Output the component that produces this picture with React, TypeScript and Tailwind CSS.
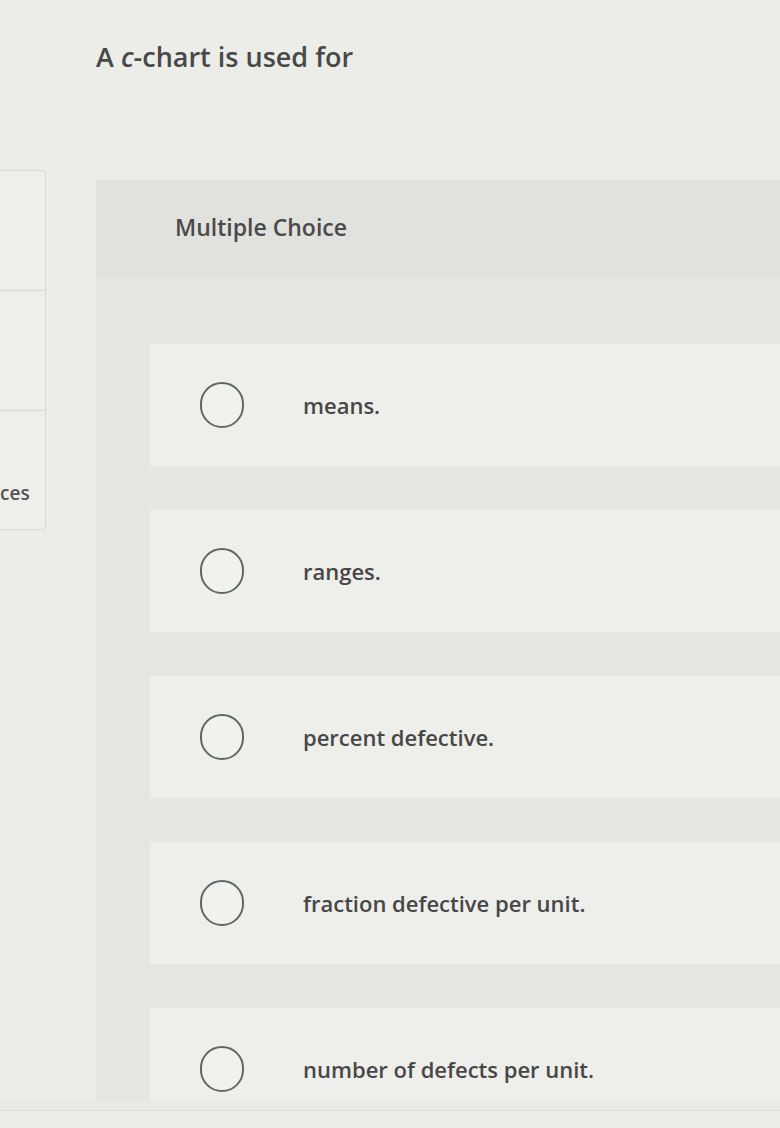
import React from "react";

const options = [
  "means.",
  "ranges.",
  "percent defective.",
  "fraction defective per unit.",
  "number of defects per unit.",
];

function Radio() {
  return (
    <span className="block w-[44px] h-[46px] shrink-0 rounded-full border-[2.5px] border-[#5d6866] bg-[#f1f1ee]" />
  );
}

export default function App() {
  return (
    <div
      className="w-[780px] h-[1128px] overflow-hidden bg-[#ecece8] text-[#474747] flex flex-col"
      style={{ fontFamily: "'Open Sans', Lato, sans-serif" }}
    >
      <div className="flex flex-1 min-h-0">
        {/* side panel, cut off by the screen edge */}
        <div className="w-[46px] shrink-0 pt-[170px]">
          <div className="flex flex-col border border-l-0 border-[#d9d9d5] rounded-r-sm bg-[#eeeeea]">
            <div className="h-[120px] border-b border-[#d9d9d5]" />
            <div className="h-[120px] border-b border-[#d9d9d5]" />
            <div className="h-[118px] flex items-end pb-[26px]">
              <span className="text-[19px] leading-none font-semibold text-[#555]">ces</span>
            </div>
          </div>
        </div>

        {/* question */}
        <div className="flex-1 min-w-0 ml-[50px] flex flex-col">
          <h1 className="pt-[37px] h-[180px] text-[27px] leading-[40px] font-semibold text-[#484848]">
            A <i>c</i>-chart is used for
          </h1>

          <div className="flex-1 min-h-0 bg-[#e5e5e1] flex flex-col">
            <div className="h-[98px] shrink-0 bg-[#e1e1de] pl-[79px] pt-[30px] text-[23px] font-semibold text-[#4a4a4a]">
              Multiple Choice
            </div>
            <div className="flex-1 min-h-0 pl-[54px] pt-[66px] flex flex-col gap-[44px] overflow-hidden">
              {options.map((o) => (
                <label
                  key={o}
                  className="h-[122px] shrink-0 bg-[#eeeeea] flex items-center pl-[50px] gap-[59px]"
                >
                  <Radio />
                  <span className="text-[22px] font-semibold text-[#474747]">{o}</span>
                </label>
              ))}
            </div>
          </div>
        </div>
      </div>
      <div className="h-[10px] shrink-0 bg-[#e9e9e5]" />
      <div className="h-px shrink-0 bg-[#d6d6d2]" />
      <div className="h-[17px] shrink-0" />
    </div>
  );
}
